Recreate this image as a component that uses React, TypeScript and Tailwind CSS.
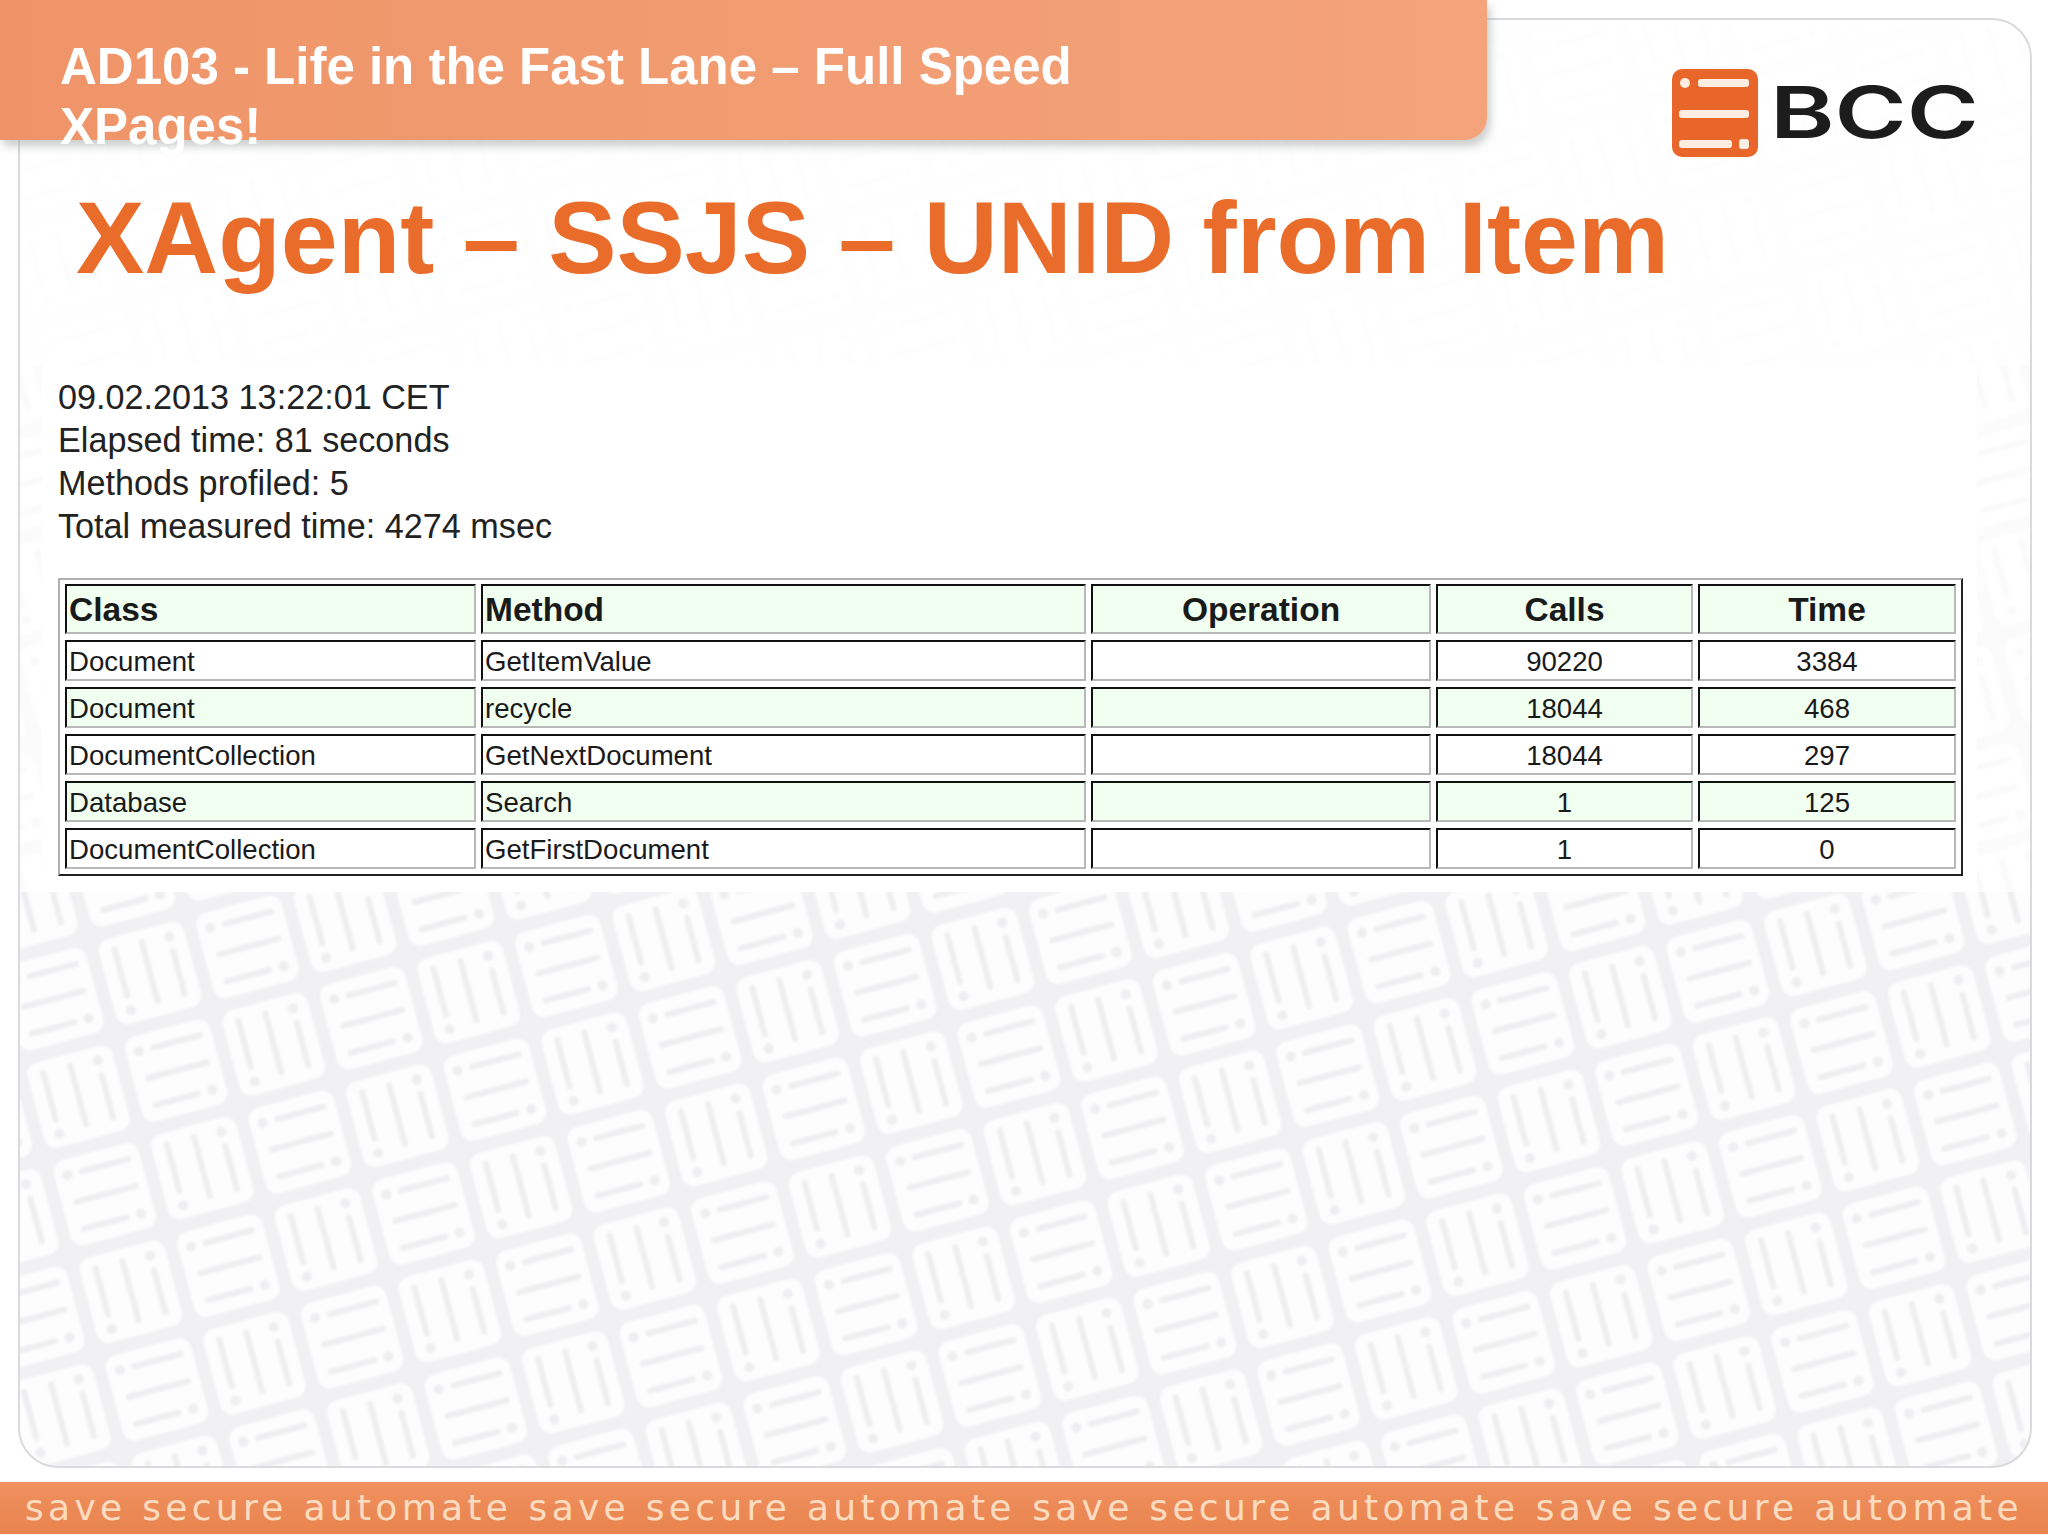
const rows = [
  ["Document", "GetItemValue", "", "90220", "3384"],
  ["Document", "recycle", "", "18044", "468"],
  ["DocumentCollection", "GetNextDocument", "", "18044", "297"],
  ["Database", "Search", "", "1", "125"],
  ["DocumentCollection", "GetFirstDocument", "", "1", "0"],
];

const cellBorder =
  "border-2 border-t-[#111] border-l-[#111] border-r-[#b8b8b8] border-b-[#b8b8b8]";

function TileBars() {
  return (
    <g fill="#efeff1">
      <rect x="0" y="0" width="88" height="88" rx="12" fill="#fdfdfe" />
      <circle cx="13" cy="16" r="5" />
      <rect x="25" y="13" width="54" height="6" rx="3" />
      <rect x="12" y="41" width="67" height="6" rx="3" />
      <rect x="12" y="69" width="50" height="6" rx="3" />
      <circle cx="74" cy="72" r="5" />
    </g>
  );
}

function Backdrop() {
  return (
    <svg className="h-full w-full blur-[1px]" aria-hidden="true">
      <defs>
        <pattern
          id="tiles"
          width="202"
          height="202"
          patternUnits="userSpaceOnUse"
          patternTransform="translate(132 955) rotate(-15) translate(-50.5 -50.5)"
        >
          <rect width="202" height="202" fill="#f1f1f3" />
          <g transform="translate(6.5 94.5) rotate(-90)">
            <TileBars />
          </g>
          <g transform="translate(107.5 195.5) rotate(-90)">
            <TileBars />
          </g>
          <g transform="translate(107.5 6.5)">
            <TileBars />
          </g>
          <g transform="translate(6.5 107.5)">
            <TileBars />
          </g>
        </pattern>
      </defs>
      <rect width="100%" height="100%" fill="url(#tiles)" />
    </svg>
  );
}

function Logo() {
  return (
    <div className="ml-[185px] mt-[69px] flex h-[88px] items-start">
      <svg width="86" height="88" viewBox="0 0 86 88" aria-hidden="true">
        <rect width="86" height="88" rx="10" fill="#e8662a" />
        <circle cx="13" cy="14" r="5" fill="#fdeee2" />
        <rect x="26" y="10" width="51" height="8" rx="3" fill="#fdeee2" />
        <rect x="7" y="41" width="70" height="8" rx="3" fill="#fdeee2" />
        <rect x="7" y="71" width="53" height="8" rx="3" fill="#fdeee2" />
        <rect x="67" y="70" width="10" height="10" rx="3" fill="#fdeee2" />
      </svg>
      <span className="ml-[12px] mt-[7px] origin-left scale-x-[1.38] font-['Inter',sans-serif] text-[71px] leading-[72px] font-semibold text-[#1c1c1c]">
        BCC
      </span>
    </div>
  );
}

export default function App() {
  return (
    <div className="relative flex h-[1536px] w-[2048px] flex-col overflow-hidden bg-white font-['Liberation_Sans',Arial,sans-serif]">
      {/* tile watermark, washed out further up by the sections above it */}
      <div className="absolute left-[18px] top-[18px] h-[1450px] w-[2014px] overflow-hidden rounded-[40px]">
        <Backdrop />
      </div>

      <div className="relative h-[365px] bg-white/90">
        <header className="flex h-[140px]">
          <div className="relative z-10 h-[140px] w-[1487px] rounded-br-[22px] bg-gradient-to-r from-[#ef9468] to-[#f4a37b] pl-[60px] pt-[37px] shadow-[3px_6px_10px_rgba(120,130,125,0.4)]">
            <p className="w-[1100px] text-[51px] leading-[60px] font-bold text-white">
              AD103 - Life in the Fast Lane – Full Speed XPages!
            </p>
          </div>
          <Logo />
        </header>
        <h1 className="pl-[76px] pt-[47px] text-[102.4px] leading-none font-bold text-[#e96c2a]">
          XAgent – SSJS – UNID from Item
        </h1>
      </div>

      <div className="relative bg-white/70">
        <section className="ml-[42px] h-[527px] w-[1935px] bg-white pl-[16px] pt-[11px]">
          <div className="text-[34.2px] leading-[43px] text-[#222]">
            <p>09.02.2013 13:22:01 CET</p>
            <p>Elapsed time: 81 seconds</p>
            <p>Methods profiled: 5</p>
            <p>Total measured time: 4274 msec</p>
          </div>
          <div className="mt-[30px] h-[298px] w-[1905px] border-2 border-t-[#b0b0b0] border-l-[#b0b0b0] border-r-[#222] border-b-[#222]">
            <table className="-mt-[2px] w-[1901px] table-fixed border-separate [border-spacing:5px_6px] text-[27.6px] leading-none text-[#1a1a1a]">
              <colgroup>
                <col className="w-[411px]" />
                <col className="w-[605px]" />
                <col className="w-[340px]" />
                <col className="w-[257px]" />
                <col className="w-[258px]" />
              </colgroup>
              <thead>
                <tr className="bg-[#f0fff0] text-[33.5px] font-bold">
                  <th className={`h-[50px] px-[2px] pt-[2px] text-left ${cellBorder}`}>Class</th>
                  <th className={`h-[50px] px-[2px] pt-[2px] text-left ${cellBorder}`}>Method</th>
                  <th className={`h-[50px] px-[2px] pt-[2px] text-center ${cellBorder}`}>Operation</th>
                  <th className={`h-[50px] px-[2px] pt-[2px] text-center ${cellBorder}`}>Calls</th>
                  <th className={`h-[50px] px-[2px] pt-[2px] text-center ${cellBorder}`}>Time</th>
                </tr>
              </thead>
              <tbody>
                {rows.map((row, i) => (
                  <tr key={i} className={i % 2 === 1 ? "bg-[#f0fff0]" : "bg-white"}>
                    <td className={`h-[41px] px-[2px] pt-[2px] ${cellBorder}`}>{row[0]}</td>
                    <td className={`h-[41px] px-[2px] pt-[2px] ${cellBorder}`}>{row[1]}</td>
                    <td className={`h-[41px] px-[2px] pt-[2px] text-center ${cellBorder}`}>{row[2]}</td>
                    <td className={`h-[41px] px-[2px] pt-[2px] text-center ${cellBorder}`}>{row[3]}</td>
                    <td className={`h-[41px] px-[2px] pt-[2px] text-center ${cellBorder}`}>{row[4]}</td>
                  </tr>
                ))}
              </tbody>
            </table>
          </div>
        </section>
      </div>

      {/* slide frame outline sits over the washes, under the banner */}
      <div className="absolute left-[18px] top-[18px] h-[1450px] w-[2014px] rounded-[40px] border-2 border-[#dadade]" />

      <footer className="relative mb-[2px] mt-auto flex h-[52px] items-center justify-between bg-gradient-to-b from-[#f0915f] to-[#e8834e] px-[25px] font-['DejaVu_Sans',sans-serif] text-[36px] leading-none tracking-[4.3px] text-[#fbdcc0]">
        <span>save secure automate</span>
        <span>save secure automate</span>
        <span>save secure automate</span>
        <span>save secure automate</span>
      </footer>
    </div>
  );
}
